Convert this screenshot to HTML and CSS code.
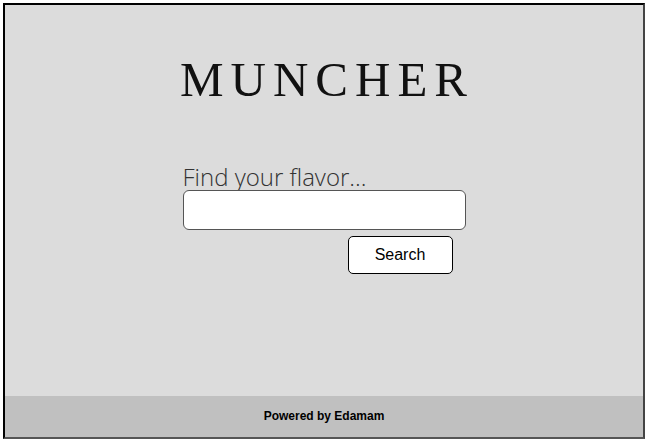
FILE: index.html
```html
<!DOCTYPE html>
<html>
<head>
<meta charset="utf-8">
<link rel="stylesheet" href="styles.css">
</head>
<body>
<div class="frame">
  <main class="main">
    <h1 class="title">MUNCHER</h1>
    <form class="search">
      <label class="label" for="q">Find your flavor...</label>
      <input class="input" id="q" type="text">
      <div class="actions"><button class="btn" type="button">Search</button></div>
    </form>
  </main>
  <footer class="footer">Powered by Edamam</footer>
</div>
</body>
</html>
```
FILE: styles.css
```css
html, body { margin: 0; padding: 0; background: #fff; }
.frame {
  margin: 3px;
  width: 638px;
  height: 432px;
  border: 2px solid #000;
  border-right-color: #444;
  border-bottom-color: #555;
  background: #dcdcdc;
  display: flex;
  flex-direction: column;
}
.main {
  flex: 1;
  display: flex;
  flex-direction: column;
  align-items: center;
}
.title {
  margin: 45px 0 0 6px;
  font-family: "Liberation Serif", serif;
  font-weight: normal;
  font-size: 49px;
  line-height: 60px;
  letter-spacing: 7px;
  color: #111;
}
.search {
  margin-top: 57px;
  width: 283px;
  display: flex;
  flex-direction: column;
}
.label {
  font-family: "Open Sans", sans-serif;
  font-weight: 300;
  font-size: 24px;
  line-height: 24px;
  color: #333;
  margin-top: -2px;
  margin-bottom: 1px;
}
.input {
  box-sizing: border-box;
  height: 40px;
  width: 283px;
  margin: 0;
  border: 1.5px solid #555;
  border-radius: 6px;
  background: #fff;
}
.actions {
  display: flex;
  justify-content: flex-end;
  padding-right: 13px;
  margin-top: 6px;
}
.btn {
  box-sizing: border-box;
  width: 105px;
  height: 38px;
  background: #fff;
  border: 1px solid #000;
  border-radius: 5px;
  font-family: "Liberation Sans", sans-serif;
  font-size: 16px;
  color: #000;
}
.footer {
  height: 41px;
  background: #c0c0c0;
  display: flex;
  align-items: center;
  justify-content: center;
  font-family: "Liberation Sans", sans-serif;
  font-weight: bold;
  font-size: 12px;
  color: #000;
  padding-bottom: 2px;
  box-sizing: border-box;
}
```
